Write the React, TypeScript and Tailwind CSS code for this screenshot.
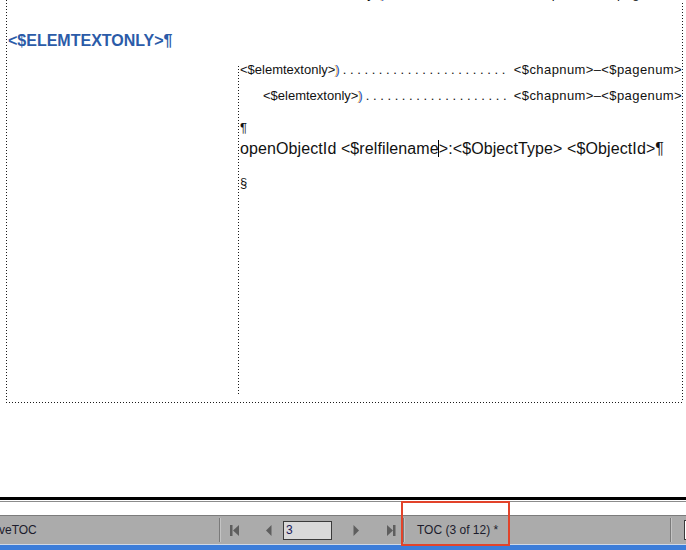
import React from "react";

const docFont = { fontFamily: '"Liberation Sans", Arial, sans-serif' };

function Leader() {
  return (
    <span className="flex-1 min-w-0 basis-0 overflow-hidden whitespace-nowrap ml-[3px] mr-[6px]">
      {". ".repeat(60)}
    </span>
  );
}

function TocLine({ indent, className = "" }: { indent: string; className?: string }) {
  return (
    <div className={`flex items-baseline whitespace-nowrap text-[13px] leading-[16px] text-[#111] ${indent} ${className}`}>
      <span className="shrink-0">&lt;$elemtextonly&gt;</span>
      <span className="shrink-0 text-[#1f5fc4] [text-shadow:-1px_0_#f0b040]">)</span>
      <Leader />
      <span className="shrink-0 tracking-[0.4px]">&lt;$chapnum&gt;–&lt;$pagenum&gt;</span>
    </div>
  );
}

function VDots({ className = "" }: { className?: string }) {
  return (
    <div
      className={`w-px shrink-0 bg-[repeating-linear-gradient(to_bottom,#1a1a1a_0_1px,transparent_1px_3px)] ${className}`}
    />
  );
}

function FirstIcon() {
  return (
    <svg width="10" height="11" viewBox="0 0 10 11">
      <rect x="0" y="0" width="2.5" height="11" fill="#5e5e5e" />
      <path d="M9 0 L3 5.5 L9 11 Z" fill="#5e5e5e" />
    </svg>
  );
}

function PrevIcon() {
  return (
    <svg width="6" height="11" viewBox="0 0 6 11">
      <path d="M5.5 0 L0 5.5 L5.5 11 Z" fill="#5e5e5e" />
    </svg>
  );
}

function NextIcon() {
  return (
    <svg width="6" height="11" viewBox="0 0 6 11">
      <path d="M0.5 0 L6 5.5 L0.5 11 Z" fill="#5e5e5e" />
    </svg>
  );
}

function LastIcon() {
  return (
    <svg width="10" height="11" viewBox="0 0 10 11">
      <path d="M1 0 L7 5.5 L1 11 Z" fill="#5e5e5e" />
      <rect x="7" y="0" width="2.5" height="11" fill="#5e5e5e" />
    </svg>
  );
}

function Sep() {
  return <div className="w-px h-[24px] bg-[#7a7a7a] shrink-0 border-r border-[#c4c4c4] box-content" />;
}

export default function App() {
  return (
    <div className="relative w-[686px] h-[550px] bg-white flex flex-col overflow-hidden" style={docFont}>
      {/* document frame */}
      <div className="pl-[6px] shrink-0">
        <div className="w-[677px] h-[403px] flex flex-col">
          <div className="flex-1 flex min-h-0">
            <VDots />
            <div className="w-[231px] shrink-0 pt-[31px] pl-px">
              <div className="text-[16px] leading-[20px] font-bold text-[#2b5ba8] whitespace-nowrap">
                &lt;$ELEMTEXTONLY&gt;¶
              </div>
            </div>
            <VDots className="mt-[66px] mb-[7px]" />
            <div className="flex-1 min-w-0 flex flex-col">
              <TocLine indent="pl-[47px]" className="-mt-[14px]" />
              <TocLine indent="pl-px" className="mt-[60px]" />
              <TocLine indent="pl-[24px]" className="mt-[10px]" />
              <div className="mt-[16px] text-[13px] leading-[16px] text-[#111] pl-px">¶</div>
              <div className="mt-[4px] text-[16px] leading-[18px] text-[#111] pl-px whitespace-nowrap tracking-[0.1px]">
                openObjectId &lt;$relfilename
                <span className="inline-block w-px h-[17px] bg-black align-[-3px] -mx-[0.5px]" />
                &gt;:&lt;$ObjectType&gt; &lt;$ObjectId&gt;¶
              </div>
              <div className="mt-[17px] text-[13px] leading-[16px] text-[#111] pl-px">§</div>
            </div>
            <VDots className="mt-[3px]" />
          </div>
          <div className="h-px bg-[repeating-linear-gradient(to_right,#1a1a1a_0_1px,transparent_1px_3px)]" />
        </div>
      </div>

      <div className="flex-1" />

      {/* bottom chrome */}
      <div className="h-[3px] bg-black shrink-0" />
      <div className="h-px bg-white shrink-0" />
      <div className="h-px bg-[#8c8c8c] shrink-0" />
      <div className="h-[13px] bg-white shrink-0" />
      <div className="h-[29px] shrink-0 bg-[#ababab] border-t border-[#7c7c7c] flex items-center text-[12px] text-[#1c1c2c]">
        <span className="w-[220px] shrink-0 -ml-[1px] text-[12px]">veTOC</span>
        <Sep />
        <div className="ml-[9px] flex items-center">
          <FirstIcon />
        </div>
        <div className="ml-[26px] flex items-center">
          <PrevIcon />
        </div>
        <div className="ml-[11px] w-[49px] h-[19px] border border-[#3a3a3a] bg-[#d9d9d9] flex items-center pl-[2px] text-[12px] text-[#1a1a5a]">
          3
        </div>
        <div className="ml-[21px] flex items-center">
          <NextIcon />
        </div>
        <div className="ml-[27px] flex items-center">
          <LastIcon />
        </div>
        <div className="ml-[7px]">
          <Sep />
        </div>
        <span className="ml-[12px] text-[12px] whitespace-nowrap">TOC (3 of 12) *</span>
        <div className="flex-1" />
        <Sep />
        <div className="ml-[12px] -mr-[8px] w-[10px] h-[20px] shrink-0 border border-[#3a3a3a] bg-white" />
      </div>
      <div className="h-px bg-[#cfd8e6] shrink-0" />
      <div className="h-[5px] bg-[#3c7dd9] shrink-0" />

      {/* highlight box */}
      <div className="absolute left-[401px] top-[501px] w-[109px] h-[45px] border-2 border-[#e2432a]" />
    </div>
  );
}
